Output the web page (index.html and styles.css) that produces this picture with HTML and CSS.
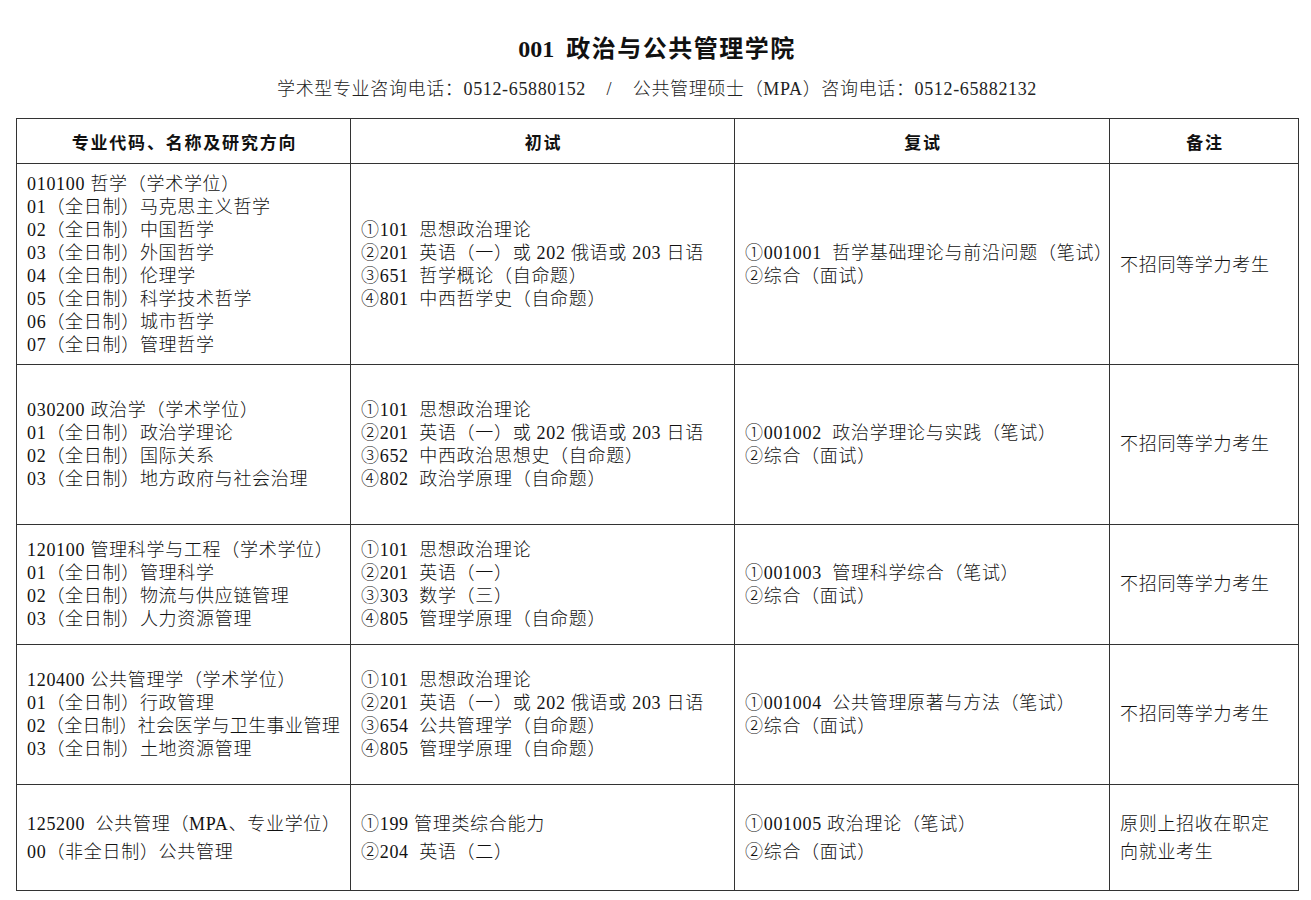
FILE: index.html
```html
<!DOCTYPE html>
<html lang="zh-CN">
<head>
<meta charset="utf-8">
<title>001 政治与公共管理学院</title>
<link rel="stylesheet" href="styles.css">
</head>
<body>
<div class="page">
  <h1 class="title"><span class="title-code">001&nbsp;&nbsp;</span>政治与公共管理学院</h1>
  <p class="subtitle">学术型专业咨询电话：0512-65880152&nbsp;&nbsp;&nbsp;&nbsp;/&nbsp;&nbsp;&nbsp;&nbsp;公共管理硕士（MPA）咨询电话：0512-65882132</p>
  <table class="plan">
    <colgroup>
      <col class="c1"><col class="c2"><col class="c3"><col class="c4">
    </colgroup>
    <thead>
      <tr class="r-head">
        <th>专业代码、名称及研究方向</th>
        <th>初试</th>
        <th>复试</th>
        <th>备注</th>
      </tr>
    </thead>
    <tbody>
      <tr class="r1">
        <td>010100 哲学（学术学位）<br>01（全日制）马克思主义哲学<br>02（全日制）中国哲学<br>03（全日制）外国哲学<br>04（全日制）伦理学<br>05（全日制）科学技术哲学<br>06（全日制）城市哲学<br>07（全日制）管理哲学</td>
        <td>①101&nbsp;&nbsp;思想政治理论<br>②201&nbsp;&nbsp;英语（一）或 202 俄语或 203 日语<br>③651&nbsp;&nbsp;哲学概论（自命题）<br>④801&nbsp;&nbsp;中西哲学史（自命题）</td>
        <td>①001001&nbsp;&nbsp;哲学基础理论与前沿问题（笔试）<br>②综合（面试）</td>
        <td>不招同等学力考生</td>
      </tr>
      <tr class="r2">
        <td>030200 政治学（学术学位）<br>01（全日制）政治学理论<br>02（全日制）国际关系<br>03（全日制）地方政府与社会治理</td>
        <td>①101&nbsp;&nbsp;思想政治理论<br>②201&nbsp;&nbsp;英语（一）或 202 俄语或 203 日语<br>③652&nbsp;&nbsp;中西政治思想史（自命题）<br>④802&nbsp;&nbsp;政治学原理（自命题）</td>
        <td>①001002&nbsp;&nbsp;政治学理论与实践（笔试）<br>②综合（面试）</td>
        <td>不招同等学力考生</td>
      </tr>
      <tr class="r3">
        <td>120100 管理科学与工程（学术学位）<br>01（全日制）管理科学<br>02（全日制）物流与供应链管理<br>03（全日制）人力资源管理</td>
        <td>①101&nbsp;&nbsp;思想政治理论<br>②201&nbsp;&nbsp;英语（一）<br>③303&nbsp;&nbsp;数学（三）<br>④805&nbsp;&nbsp;管理学原理（自命题）</td>
        <td>①001003&nbsp;&nbsp;管理科学综合（笔试）<br>②综合（面试）</td>
        <td>不招同等学力考生</td>
      </tr>
      <tr class="r4">
        <td>120400 公共管理学（学术学位）<br>01（全日制）行政管理<br><span class="tight">02（全日制）社会医学与卫生事业管理</span><br>03（全日制）土地资源管理</td>
        <td>①101&nbsp;&nbsp;思想政治理论<br>②201&nbsp;&nbsp;英语（一）或 202 俄语或 203 日语<br>③654&nbsp;&nbsp;公共管理学（自命题）<br>④805&nbsp;&nbsp;管理学原理（自命题）</td>
        <td>①001004&nbsp;&nbsp;公共管理原著与方法（笔试）<br>②综合（面试）</td>
        <td>不招同等学力考生</td>
      </tr>
      <tr class="r5">
        <td>125200&nbsp;&nbsp;公共管理（MPA、专业学位）<br>00（非全日制）公共管理</td>
        <td>①199 管理类综合能力<br>②204&nbsp;&nbsp;英语（二）</td>
        <td>①001005 政治理论（笔试）<br>②综合（面试）</td>
        <td>原则上招收在职定<br>向就业考生</td>
      </tr>
    </tbody>
  </table>
</div>
</body>
</html>
```

FILE: styles.css
```css
html, body {
  margin: 0;
  padding: 0;
  background: #ffffff;
}

.page {
  width: 1282px;
  padding: 0 13px 0 16px;
  font-family: "Liberation Serif", "Noto Sans CJK SC", serif;
  color: #111111;
}

.title {
  margin: 29px 0 0 0;
  height: 36px;
  line-height: 36px;
  text-align: center;
  font-family: "Noto Sans CJK SC", sans-serif;
  font-size: 24px;
  font-weight: 700;
  letter-spacing: 1.5px;
}

.title-code {
  font-family: "Liberation Serif", serif;
  font-size: 24px;
  font-weight: 700;
  letter-spacing: 0;
}

.subtitle {
  margin: 11px 0 0 0;
  height: 26px;
  line-height: 26px;
  text-align: center;
  font-size: 18px;
  letter-spacing: 0.65px;
  font-weight: 300;
  color: #222222;
}

.plan {
  margin-top: 16px;
  width: 1282px;
  border-collapse: collapse;
  table-layout: fixed;
  font-size: 18px;
  font-weight: 300;
  letter-spacing: 0.7px;
}

.c1 { width: 334px; }
.c2 { width: 384px; }
.c3 { width: 375px; }
.c4 { width: 189px; }

.plan th,
.plan td {
  border: 1px solid #333333;
  padding: 0 2px 0 10px;
  vertical-align: middle;
  text-align: left;
  line-height: 23px;
  white-space: nowrap;
}

.plan th {
  text-align: center;
  font-family: "Noto Sans CJK SC", sans-serif;
  font-size: 17px;
  font-weight: 700;
  letter-spacing: 1.8px;
  padding: 0 0 0 2px;
}

.r-head { height: 45px; }
.r1 { height: 201px; }
.r2 { height: 160px; }
.r3 { height: 120px; }
.r4 { height: 140px; }
.r5 { height: 106px; }

.r1 td { padding-top: 2px; }

.r5 td { line-height: 28px; }

.tight { letter-spacing: 0.4px; }
```
